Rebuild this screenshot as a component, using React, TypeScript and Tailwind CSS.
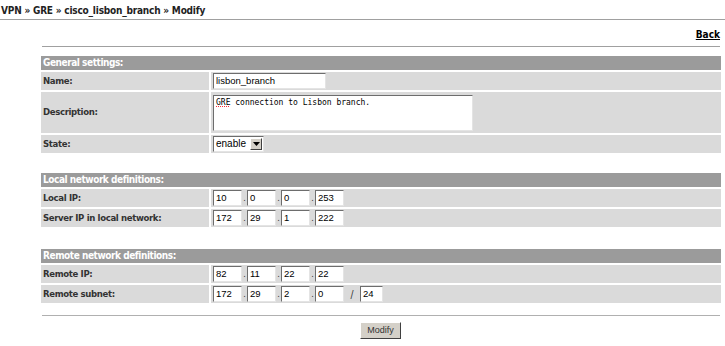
import React from "react";

const font = { fontFamily: '"DejaVu Sans Condensed", "DejaVu Sans", Verdana, sans-serif' };
const inputFont = { fontFamily: '"Liberation Sans", Arial, sans-serif' };

function Box({ value, w }: { value: string; w: string }) {
  return (
    <div
      className={`h-[16px] ${w} bg-white border border-t-[#6d6d6d] border-l-[#6d6d6d] border-b-[#e4e4e4] border-r-[#e4e4e4] text-[9.5px] leading-[14px] pl-[2px] text-black overflow-hidden whitespace-nowrap`}
      style={inputFont}
    >
      {value}
    </div>
  );
}

function Ip({ parts, mask }: { parts: string[]; mask?: string }) {
  return (
    <div className="flex items-center">
      {parts.map((p, i) => (
        <React.Fragment key={i}>
          {i > 0 && <span className="w-[5px] text-[9px] leading-[14px] text-[#333] text-center">.</span>}
          <Box value={p} w="w-[29px]" />
        </React.Fragment>
      ))}
      {mask && (
        <>
          <span className="w-[16px] text-[10px] text-[#333] text-center">/</span>
          <Box value={mask} w="w-[23px]" />
        </>
      )}
    </div>
  );
}

function Header({ title }: { title: string }) {
  return (
    <div className="h-[14px] bg-[#9b9b9b] text-white font-bold text-[10px] leading-[14px] pl-[2px] tracking-[-0.45px]">
      {title}
    </div>
  );
}

function Row({ label, h = "h-[18px]", children }: { label: string; h?: string; children: React.ReactNode }) {
  return (
    <div className={`flex gap-[2px] ${h}`}>
      <div className="w-[168px] bg-[#dadada] flex items-center pl-[2px] font-bold text-[9.5px] text-[#333333] tracking-[-0.35px]">
        {label}
      </div>
      <div className="flex-1 bg-[#dadada] flex items-center pl-[2px]">{children}</div>
    </div>
  );
}

export default function App() {
  return (
    <div className="w-[725px] h-[346px] bg-white overflow-hidden" style={font}>
      <div className="pl-[1px] pt-[3px] h-[19px] font-bold text-[10px] text-[#222] tracking-[-0.2px]">
        VPN » GRE » cisco_lisbon_branch » Modify
      </div>
      <div className="h-px bg-[#a0a0a0]" />
      <div className="ml-[41px] mr-[4px]">
        <div className="flex justify-end pt-[7px] h-[26px]">
          <span className="font-bold text-[10px] underline text-black mr-[1px]">Back</span>
        </div>
        <div className="h-px bg-[#a0a0a0] ml-[1px] mr-[1px]" />
        <div className="mt-[9px] flex flex-col gap-[2px]">
          <Header title="General settings:" />
          <Row label="Name:">
            <Box value="lisbon_branch" w="w-[113px]" />
          </Row>
          <Row label="Description:" h="h-[41px]">
            <div
              className="h-[36px] w-[260px] bg-white border border-t-[#6d6d6d] border-l-[#6d6d6d] border-b-[#e4e4e4] border-r-[#e4e4e4] text-[8px] leading-[11px] pl-[2px] pt-[1px] text-black"
              style={{ fontFamily: '"DejaVu Sans Mono", monospace' }}
            >
              <span className="underline decoration-dotted decoration-red-500">GRE</span> connection to Lisbon branch.
            </div>
          </Row>
          <Row label="State:">
            <div className="h-[16px] w-[51px] bg-white border border-t-[#6d6d6d] border-l-[#6d6d6d] border-b-[#e4e4e4] border-r-[#e4e4e4] flex items-center justify-between">
              <span className="text-[10px] leading-[14px] pl-[2px] text-black" style={inputFont}>
                enable
              </span>
              <div className="w-[12px] h-[12px] mr-[1px] bg-[#d4d0c8] border border-t-white border-l-white border-b-[#404040] border-r-[#404040] flex items-center justify-center">
                <svg width="7" height="4" viewBox="0 0 7 4">
                  <polygon points="0,0 7,0 3.5,4" fill="#000" />
                </svg>
              </div>
            </div>
          </Row>
        </div>
        <div className="mt-[20px] flex flex-col gap-[2px]">
          <Header title="Local network definitions:" />
          <Row label="Local IP:">
            <Ip parts={["10", "0", "0", "253"]} />
          </Row>
          <Row label="Server IP in local network:">
            <Ip parts={["172", "29", "1", "222"]} />
          </Row>
        </div>
        <div className="mt-[22px] flex flex-col gap-[2px]">
          <Header title="Remote network definitions:" />
          <Row label="Remote IP:">
            <Ip parts={["82", "11", "22", "22"]} />
          </Row>
          <Row label="Remote subnet:">
            <Ip parts={["172", "29", "2", "0"]} mask="24" />
          </Row>
        </div>
        <div className="h-px bg-[#b0b0b0] mt-[12px] ml-[1px] mr-[1px]" />
        <div className="flex justify-center mt-[6px] pr-[1px]">
          <button
            className="h-[17px] w-[41px] bg-[#d4d0c8] border border-t-white border-l-white border-b-[#404040] border-r-[#404040] text-[9px] text-[#333] leading-[13px]"
            style={inputFont}
          >
            Modify
          </button>
        </div>
      </div>
    </div>
  );
}
